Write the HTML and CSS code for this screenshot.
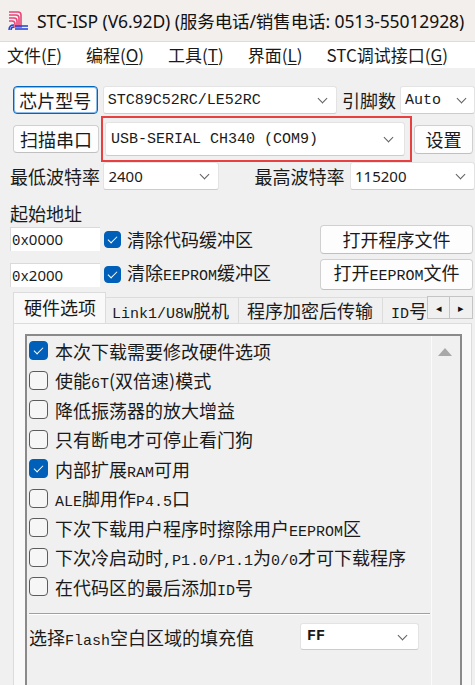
FILE: index.html
```html
<!DOCTYPE html>
<html lang="zh-CN">
<head>
    <meta charset="UTF-8">
    <title>STC-ISP</title>
    <link rel="stylesheet" href="styles.css">
</head>
<body>
    <!-- Barre de titre -->
    <div class="titlebar">
        <svg class="app-icon" width="24" height="22" viewBox="0 0 24 22">
            <path d="M1 2h9q3 0 3 3v13M1 5h7q3 0 3 3v10M1 8h5q3 0 3 3v7M1 11h3q3 0 3 3v4" fill="none" stroke="#e8457a" stroke-width="1.6"/>
            <path d="M1 20q0-5 5-5M3 20q0-3 3-3M7 19h13M7 16h13" fill="none" stroke="#1f3fd8" stroke-width="1.5"/>
        </svg>
        <span class="title-text">STC-ISP (V6.92D) (服务电话/销售电话: 0513-55012928)</span>
    </div>

    <!-- Menu -->
    <div class="menubar">
        <span>文件(<u>F</u>)</span>
        <span>编程(<u>O</u>)</span>
        <span>工具(<u>T</u>)</span>
        <span>界面(<u>L</u>)</span>
        <span>STC调试接口(<u>G</u>)</span>
    </div>

    <div class="main">
        <div class="row row1">
            <button class="btn btn-focus btn-chip">芯片型号</button>
            <div class="combo combo-chip"><span class="m">STC89C52RC/LE52RC</span><i class="chev"></i></div>
            <span class="lbl lbl-pins">引脚数</span>
            <div class="combo combo-pins"><span class="m">Auto</span><i class="chev"></i></div>
        </div>

        <div class="row row2">
            <button class="btn btn-chip">扫描串口</button>
            <div class="redbox">
                <div class="combo combo-port"><span class="m">USB-SERIAL CH340 (COM9)</span><i class="chev"></i></div>
            </div>
            <button class="btn btn-set">设置</button>
        </div>

        <div class="row row3">
            <span class="lbl lbl-baud">最低波特率</span>
            <div class="combo combo-low"><span class="num">2400</span><i class="chev"></i></div>
            <span class="lbl lbl-baud2">最高波特率</span>
            <div class="combo combo-high"><span class="num">115200</span><i class="chev"></i></div>
        </div>

        <div class="addr-title">起始地址</div>

        <div class="row row4">
            <div class="addr"><span class="m">0x</span>0000</div>
            <span class="cb cb-small checked"></span>
            <span class="cb-text">清除代码缓冲区</span>
            <button class="btn btn-open">打开程序文件</button>
        </div>

        <div class="row row5">
            <div class="addr"><span class="m">0x</span>2000</div>
            <span class="cb cb-small checked"></span>
            <span class="cb-text">清除<span class="m">EEPROM</span>缓冲区</span>
            <button class="btn btn-open btn-open2">打开<span class="m">EEPROM</span>文件</button>
        </div>

        <!-- Onglets -->
        <div class="tabs">
            <div class="tab active">硬件选项</div>
            <div class="tab tab-link"><span class="m">Link1/U8W</span>脱机</div>
            <div class="tab tab-enc">程序加密后传输</div>
            <div class="tab tab-id"><span class="m">ID</span>号</div>
            <div class="tab-arrows">
                <span class="arrow">&#9666;</span>
                <span class="arrow">&#9656;</span>
            </div>
        </div>

        <div class="panel">
            <div class="listbox">
                <div class="list">
                    <div class="item"><span class="cb checked"></span><span>本次下载需要修改硬件选项</span></div>
                    <div class="item"><span class="cb"></span><span>使能<span class="m">6T</span>(双倍速)模式</span></div>
                    <div class="item"><span class="cb"></span><span>降低振荡器的放大增益</span></div>
                    <div class="item"><span class="cb"></span><span>只有断电才可停止看门狗</span></div>
                    <div class="item"><span class="cb checked"></span><span>内部扩展<span class="m">RAM</span>可用</span></div>
                    <div class="item"><span class="cb"></span><span><span class="m">ALE</span>脚用作<span class="m">P4.5</span>口</span></div>
                    <div class="item"><span class="cb"></span><span>下次下载用户程序时擦除用户<span class="m">EEPROM</span>区</span></div>
                    <div class="item"><span class="cb"></span><span>下次冷启动时<span class="m">,P1.0/P1.1</span>为<span class="m">0/0</span>才可下载程序</span></div>
                    <div class="item"><span class="cb"></span><span>在代码区的最后添加<span class="m">ID</span>号</span></div>

                    <div class="sep"></div>

                    <div class="fill-row">
                        <span class="fill-lbl">选择<span class="m">Flash</span>空白区域的填充值</span>
                        <div class="combo combo-ff"><span class="m bold">FF</span><i class="chev"></i></div>
                    </div>
                </div>
                <div class="scrollbar">
                    <span class="up"></span>
                </div>
            </div>
        </div>
    </div>
</body>
</html>
```

FILE: styles.css
```css
/* Général */
body {
    margin: 0;
    width: 475px;
    height: 685px;
    overflow: hidden;
    background-color: #f0f0f0;
    font-family: "Noto Sans CJK SC", "Noto Sans", sans-serif;
    color: #1a1a1a;
}

/* Texte latin style SimSun */
.m {
    font-family: "Liberation Mono", monospace;
    font-size: 15px;
}

.bold {
    font-weight: bold;
}

/* Barre de titre */
.titlebar {
    height: 42px;
    display: flex;
    align-items: center;
    padding-left: 8px;
    background-color: #f3efec;
    border-bottom: 1px solid #dcdcdc;
    box-sizing: border-box;
}

.app-icon {
    margin-right: 5px;
}

.title-text {
    font-family: "Noto Sans", "Noto Sans CJK SC", sans-serif;
    font-size: 17.5px;
    letter-spacing: -0.1px;
    color: #111111;
    white-space: nowrap;
}

/* Menu */
.menubar {
    height: 26px;
    display: flex;
    align-items: center;
    gap: 24px;
    padding-left: 7px;
    background-color: #ffffff;
    font-size: 17px;
    line-height: 26px;
}

.menubar u {
    text-underline-offset: 2px;
}

/* Contenu principal */
.main {
    padding-top: 18px;
}

.row {
    display: flex;
    align-items: center;
}

.lbl {
    font-size: 18px;
    line-height: 24px;
    white-space: nowrap;
}

/* Boutons */
.btn {
    font-family: "Noto Sans CJK SC", sans-serif;
    font-size: 18px;
    line-height: 20px;
    color: #1a1a1a;
    background-color: #fdfdfd;
    border: 1px solid #d0d0d0;
    border-bottom-color: #c0c0c0;
    border-radius: 4px;
    padding: 0;
    box-sizing: border-box;
    white-space: nowrap;
}

.btn-focus {
    border: 1px solid #0067c0;
    box-shadow: inset 0 0 0 1px #8fbce6;
}

.btn-chip {
    width: 86px;
    height: 28px;
    margin-left: 13px;
}

.btn-set {
    width: 59px;
    height: 29px;
    margin-left: 2px;
}

.btn-open {
    width: 153px;
    height: 29px;
    margin-left: auto;
    margin-right: 2px;
}

.btn-open2 {
    height: 31px;
}

/* Listes déroulantes */
.combo {
    position: relative;
    height: 28px;
    box-sizing: border-box;
    background-color: #ffffff;
    border: 1px solid #e3e3e3;
    border-bottom-color: #cccccc;
    border-radius: 3px;
    display: flex;
    align-items: center;
    padding-left: 4px;
    white-space: nowrap;
    overflow: hidden;
}

.chev {
    position: absolute;
    right: 10px;
    top: 50%;
    width: 6px;
    height: 6px;
    margin-top: -5px;
    border-right: 1px solid #606060;
    border-bottom: 1px solid #606060;
    transform: rotate(45deg);
}

.num {
    font-family: "Noto Sans", sans-serif;
    font-size: 15px;
}

.combo-chip {
    width: 238px;
    margin-left: 5px;
}

.lbl-pins {
    margin-left: 5px;
}

.combo-pins {
    width: 75px;
    margin-left: 4px;
    flex-shrink: 0;
}

.combo-pins .chev {
    right: 9px;
}

/* Cadre rouge */
.row2 {
    margin-top: 2px;
}

.redbox {
    width: 311px;
    height: 46px;
    margin-left: 2px;
    box-sizing: border-box;
    border: 2px solid #e84040;
    padding: 4px 0 0 2px;
}

.combo-port {
    width: 300px;
    height: 34px;
    padding-left: 5px;
}

.combo-port .chev {
    right: 12px;
}

.row3 {
    height: 28px;
}

.lbl-baud {
    margin-left: 10px;
    width: 95px;
}

.combo-low {
    width: 117px;
}

.lbl-baud2 {
    margin-left: 36px;
    width: 97px;
}

.combo-high {
    width: 125px;
    flex-shrink: 0;
}

/* Adresses */
.addr-title {
    margin: 12px 0 0 10px;
    font-size: 18px;
    line-height: 22px;
}

.row4 {
    height: 30px;
}

.row5 {
    height: 33px;
    margin-top: 4px;
}

.addr {
    width: 90px;
    height: 24px;
    margin-left: 10px;
    box-sizing: border-box;
    background-color: #ffffff;
    border-top: 1px solid #dadada;
    border-left: 1px solid #dadada;
    font-family: "Noto Sans", sans-serif;
    font-size: 15px;
    line-height: 22px;
    padding-left: 1px;
}

.addr .m {
    font-size: 14px;
}

/* Cases à cocher */
.cb {
    display: inline-block;
    width: 19px;
    height: 19px;
    box-sizing: border-box;
    border: 1px solid #5c5c5c;
    border-radius: 4px;
    background-color: #f6f6f6;
    flex-shrink: 0;
    position: relative;
}

.cb.checked {
    background-color: #005fb8;
    border-color: #005fb8;
}

.cb.checked::after {
    content: "";
    position: absolute;
    left: 6px;
    top: 3px;
    width: 4px;
    height: 8px;
    border-right: 1.5px solid #ffffff;
    border-bottom: 1.5px solid #ffffff;
    transform: rotate(45deg);
}

.cb-small {
    width: 17px;
    height: 17px;
    margin-left: 4px;
}

.cb-small.checked::after {
    left: 5px;
    top: 2px;
}

.cb-text {
    margin-left: 6px;
    font-size: 18px;
    line-height: 24px;
    white-space: nowrap;
}

/* Onglets */
.tabs {
    position: relative;
    display: flex;
    align-items: flex-end;
    height: 31px;
    padding-left: 13px;
    margin-top: 1px;
}

.tab {
    height: 26px;
    box-sizing: border-box;
    border-top: 1px solid #dcdcdc;
    border-right: 1px solid #dcdcdc;
    font-size: 18px;
    line-height: 24px;
    padding-left: 8px;
    white-space: nowrap;
    overflow: hidden;
    background-color: #f0f0f0;
}

.tab.active {
    width: 93px;
    height: 31px;
    background-color: #f9f9f9;
    border: 1px solid #dcdcdc;
    border-bottom: none;
    line-height: 28px;
    padding-left: 10px;
    position: relative;
    z-index: 1;
}

.tab-link {
    width: 133px;
    padding-left: 6px;
}

.tab-enc {
    width: 144px;
    padding-left: 8px;
}

.tab-id {
    width: 46px;
    padding-left: 8px;
    border-right: none;
}

.tab-arrows {
    position: absolute;
    left: 427px;
    top: 4px;
    display: flex;
}

.arrow {
    width: 23px;
    height: 23px;
    box-sizing: border-box;
    border: 1px solid #c4c4c4;
    background-color: #f0f0f0;
    font-size: 11px;
    line-height: 21px;
    text-align: center;
    color: #111111;
}

.arrow + .arrow {
    border-left: none;
}

/* Panneau */
.panel {
    margin-left: 13px;
    width: 459px;
    height: 364px;
    overflow: hidden;
    box-sizing: border-box;
    background-color: #f9f9f9;
    border: 1px solid #dcdcdc;
    border-bottom: none;
    padding: 10px 0 0 11px;
}

.listbox {
    width: 437px;
    height: 400px;
    box-sizing: border-box;
    border: 2px solid #8a8a8a;
    background-color: #f0f0f0;
    display: flex;
}

.list {
    width: 403px;
    padding-left: 2px;
}

.item {
    height: 29.5px;
    display: flex;
    align-items: center;
    gap: 7px;
    font-size: 18px;
    white-space: nowrap;
}

.sep {
    margin-top: 11px;
    width: 401px;
    height: 1px;
    background-color: #a0a0a0;
    border-bottom: 1px solid #ffffff;
}

.fill-row {
    height: 36px;
    margin-top: 4px;
    display: flex;
    align-items: center;
    font-size: 18px;
}

.fill-lbl {
    width: 271px;
    white-space: nowrap;
}

.combo-ff {
    width: 119px;
    height: 27px;
    padding-left: 6px;
}

.combo-ff .chev {
    right: 12px;
}

/* Barre de défilement */
.scrollbar {
    width: 28px;
    border-left: 1px solid #fbfbfb;
    position: relative;
}

.up {
    position: absolute;
    left: 6px;
    top: 12px;
    width: 0;
    height: 0;
    border-left: 7px solid transparent;
    border-right: 7px solid transparent;
    border-bottom: 8px solid #a8a8a8;
}
```
